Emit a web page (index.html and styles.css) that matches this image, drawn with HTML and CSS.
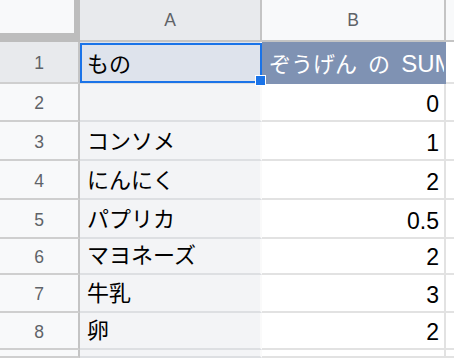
FILE: index.html
```html
<!DOCTYPE html>
<html lang="ja">
<head>
<meta charset="utf-8">
<title>ピボットテーブル</title>
<link rel="stylesheet" href="styles.css">
</head>
<body>
<div class="sheet">
  <div class="corner"></div>
  <div class="colhead sel">A</div>
  <div class="colhead">B</div>
  <div class="colhead rest"></div>

  <div class="rowhead sel">1</div>
  <div class="cell a a1"><span>もの</span><i class="handle"></i></div>
  <div class="cell b b1"><span>ぞうげん の <span class="latin">SUM</span></span></div>
  <div class="cell c"></div>

  <div class="rowhead">2</div>
  <div class="cell a"></div>
  <div class="cell b num">0</div>
  <div class="cell c"></div>

  <div class="rowhead">3</div>
  <div class="cell a">コンソメ</div>
  <div class="cell b num">1</div>
  <div class="cell c"></div>

  <div class="rowhead">4</div>
  <div class="cell a">にんにく</div>
  <div class="cell b num">2</div>
  <div class="cell c"></div>

  <div class="rowhead">5</div>
  <div class="cell a">パプリカ</div>
  <div class="cell b num">0.5</div>
  <div class="cell c"></div>

  <div class="rowhead">6</div>
  <div class="cell a">マヨネーズ</div>
  <div class="cell b num">2</div>
  <div class="cell c"></div>

  <div class="rowhead">7</div>
  <div class="cell a">牛乳</div>
  <div class="cell b num">3</div>
  <div class="cell c"></div>

  <div class="rowhead">8</div>
  <div class="cell a">卵</div>
  <div class="cell b num">2</div>
  <div class="cell c"></div>

  <div class="rowhead"></div>
  <div class="cell a"></div>
  <div class="cell b"></div>
  <div class="cell c"></div>
</div>
</body>
</html>
```

FILE: styles.css
```css
* { box-sizing: border-box; }

html, body {
  margin: 0;
  padding: 0;
  background: #ffffff;
  overflow: hidden;
}

.sheet {
  display: grid;
  grid-template-columns: 80px 182px 184px 1fr;
  grid-template-rows: 42px 42px 38px 39px 39px 39px 36px 38px 37px 1fr;
  width: 454px;
  height: 358px;
  font-family: "Liberation Sans", "Noto Sans CJK JP", sans-serif;
}

.corner {
  background: #f8f9fa;
  border-right: 6px solid #bdbdbd;
  border-bottom: 9px solid #bdbdbd;
}

.colhead {
  display: flex;
  align-items: center;
  justify-content: center;
  background: #f8f9fa;
  border-right: 2px solid #c4c4c4;
  border-bottom: 2px solid #c4c4c4;
  color: #5f6368;
  font-size: 17.5px;
  padding-top: 1px;
}

.colhead.sel { background: #e8eaed; }
.colhead.rest { border-right: 0; }

.rowhead {
  display: flex;
  align-items: center;
  justify-content: center;
  background: #f8f9fa;
  border-right: 2px solid #c4c4c4;
  border-bottom: 2px solid #cfcfcf;
  color: #5f6368;
  font-size: 17.5px;
  padding-top: 3px;
}

.rowhead.sel { background: #e8eaed; }

.cell {
  display: flex;
  align-items: flex-end;
  border-bottom: 2px solid #e2e2e2;
  border-right: 2px solid #e2e2e2;
  color: #000;
  white-space: nowrap;
  overflow: hidden;
}

.a {
  background: #f3f4f6;
  border-right-color: #fafafa;
  border-bottom-color: #dddfe2;
  font-size: 22px;
  line-height: 26px;
  padding: 0 0 4px 7px;
}

.b {
  background: #ffffff;
}

.num {
  justify-content: flex-end;
  font-size: 23px;
  line-height: 23px;
  padding: 0 5px 4px 0;
}

.c {
  border-right: 0;
  background: #ffffff;
}

.a1 {
  position: relative;
  overflow: visible;
  background: #dee3ec;
  z-index: 2;
}

.a1::after {
  content: "";
  position: absolute;
  left: 0;
  right: -2px;
  top: 1px;
  bottom: -1px;
  border: 2px solid #1a73e8;
  pointer-events: none;
}

.handle {
  position: absolute;
  left: 176px;
  top: 34px;
  width: 9px;
  height: 9px;
  background: #1a73e8;
  box-shadow: 0 0 0 1px #ffffff;
  z-index: 3;
}

.b1 {
  background: #7f92b3;
  border-right-color: #7f92b3;
  border-bottom-color: #7f92b3;
  color: #ffffff;
  font-size: 22px;
  line-height: 26px;
  word-spacing: 5px;
  padding: 0 0 4px 7px;
}

.latin {
  font-size: 24px;
}
```
